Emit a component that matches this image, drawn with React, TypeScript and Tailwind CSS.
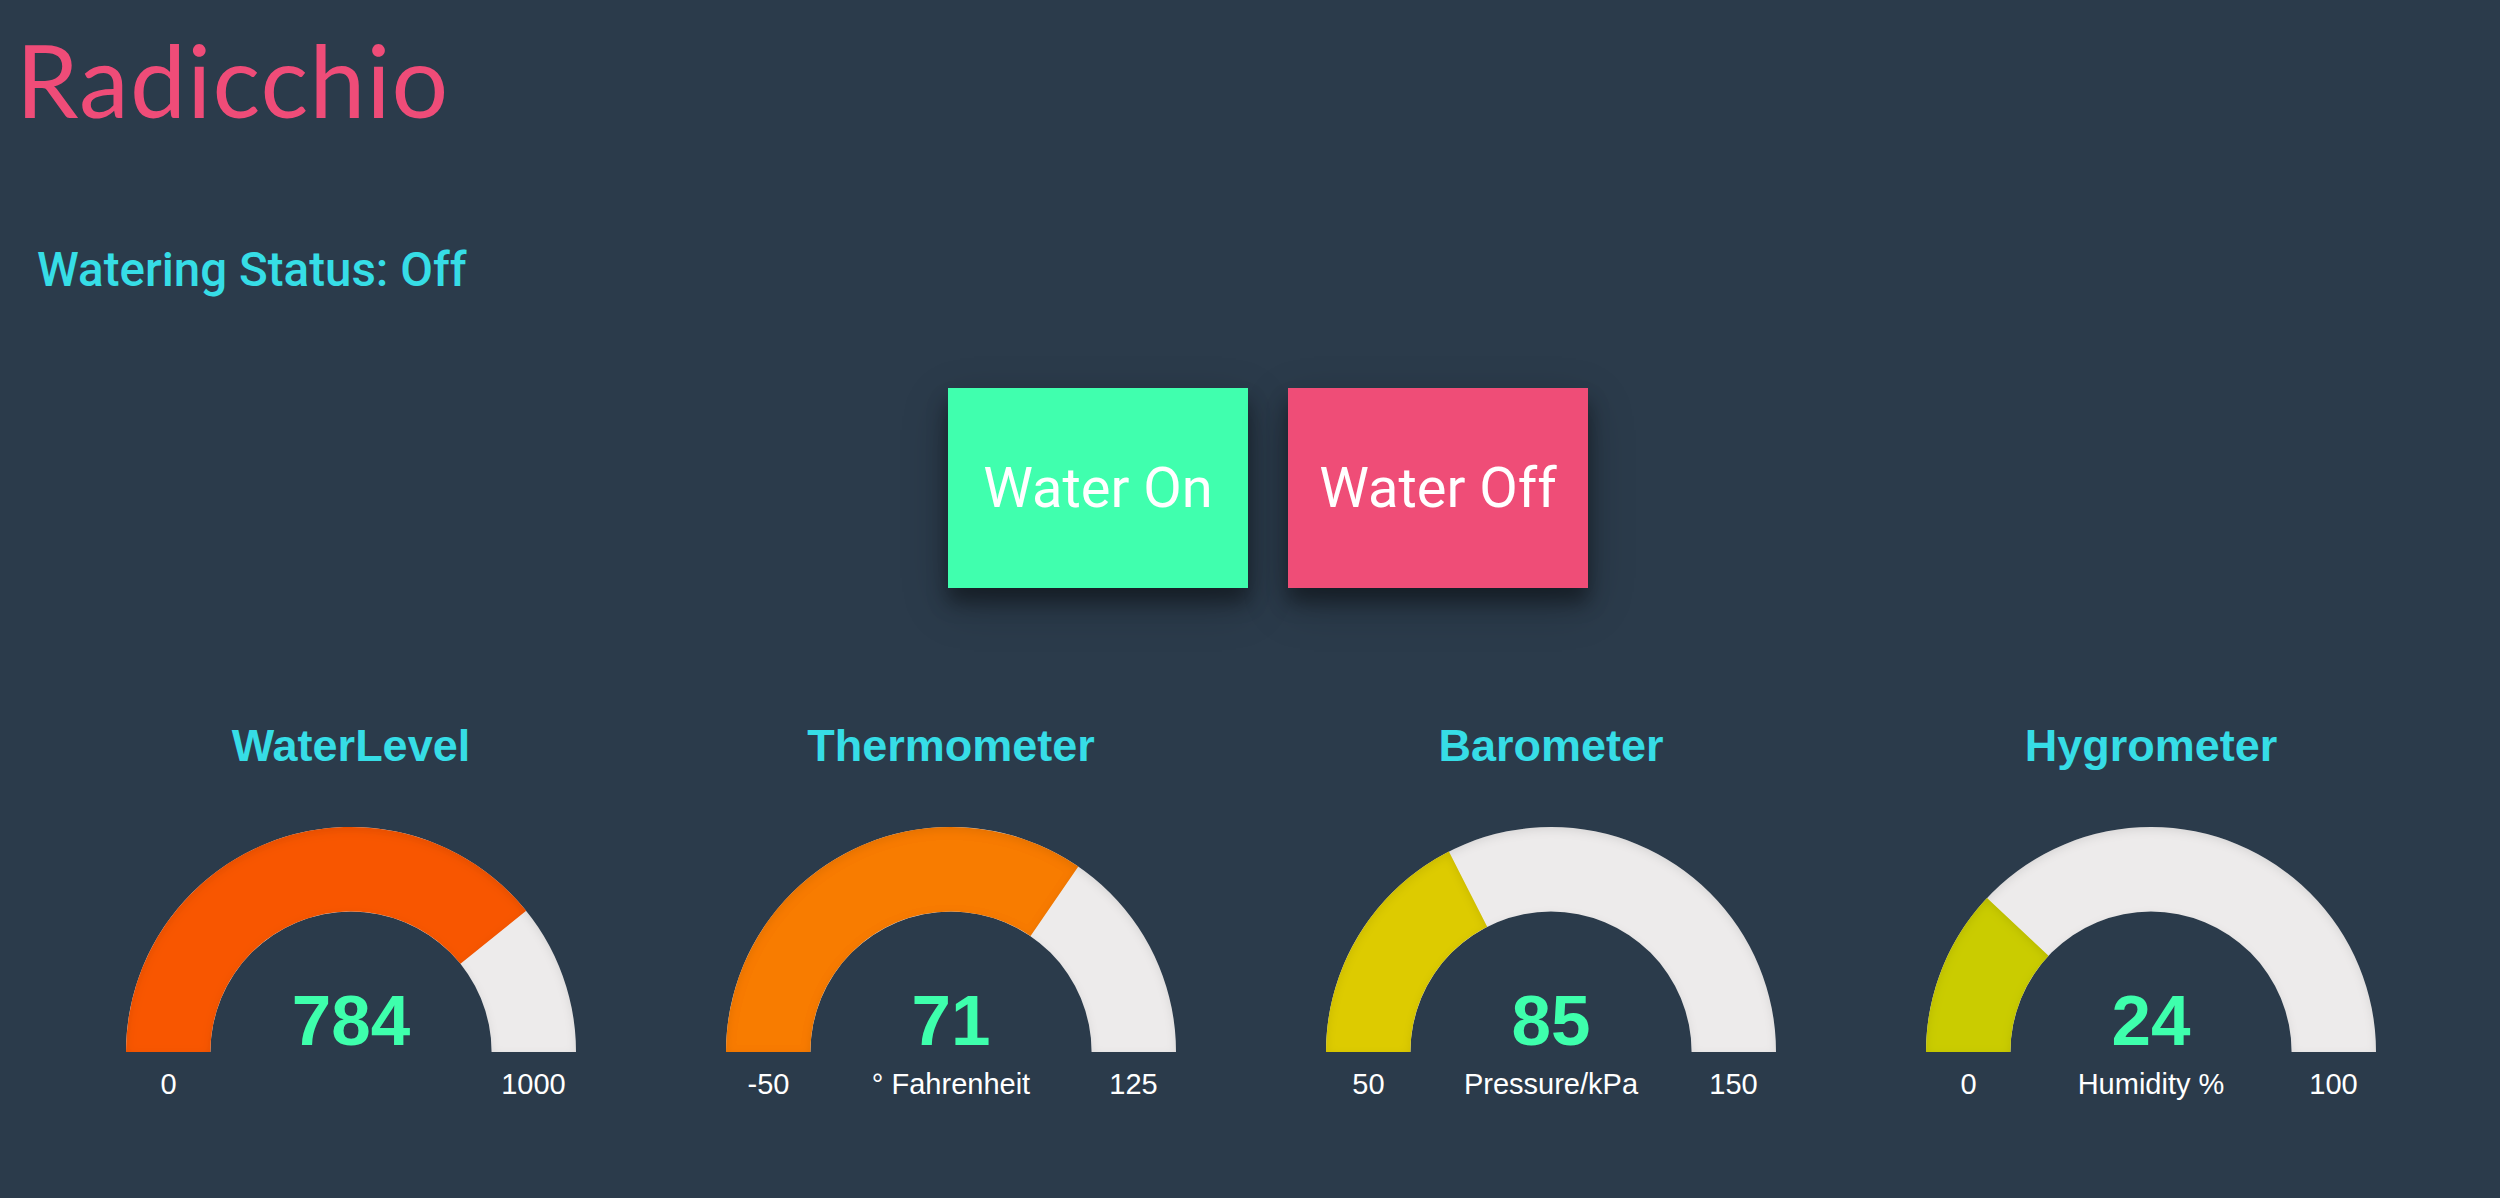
import React from "react";

type G = {
  title: string;
  value: number;
  min: number;
  max: number;
  label?: string;
  color: string;
};

const gauges: G[] = [
  { title: "WaterLevel", value: 784, min: 0, max: 1000, color: "#f85600" },
  { title: "Thermometer", value: 71, min: -50, max: 125, label: "° Fahrenheit", color: "#f87b00" },
  { title: "Barometer", value: 85, min: 50, max: 150, label: "Pressure/kPa", color: "#ddcb02" },
  { title: "Hygrometer", value: 24, min: 0, max: 100, label: "Humidity %", color: "#cacc04" },
];

function arcPath(frac: number, cx: number, cy: number, Ro: number, Ri: number) {
  const a = (1 - frac) * Math.PI;
  const Xo = cx + Ro * Math.cos(a);
  const Yo = cy - Ro * Math.sin(a);
  const Xi = cx + Ri * Math.cos(a);
  const Yi = cy - Ri * Math.sin(a);
  return `M${cx - Ri},${cy} L${cx - Ro},${cy} A${Ro},${Ro} 0 0 1 ${Xo},${Yo} L${Xi},${Yi} A${Ri},${Ri} 0 0 0 ${cx - Ri},${cy} Z`;
}

function Gauge({ g, idx }: { g: G; idx: number }) {
  const frac = (g.value - g.min) / (g.max - g.min);
  const Ro = 225;
  const Ri = 140.6;
  const cx = 225;
  const cy = 225;
  const fid = `inner-shadow-${idx}`;
  return (
    <div className="flex flex-col items-center font-['Liberation_Sans',Arial,sans-serif]">
      <div className="text-[45px] leading-[46px] font-bold text-[#36dde6] whitespace-nowrap">{g.title}</div>
      <div className="relative mt-[58px] h-[225px] w-[450px]">
        <svg width="450" height="225" viewBox="0 0 450 225" className="block">
          <defs>
            <filter id={fid} x="-10%" y="-10%" width="120%" height="120%">
              <feOffset dx="0" dy="3" />
              <feGaussianBlur result="offset-blur" stdDeviation="5" />
              <feComposite operator="out" in="SourceGraphic" in2="offset-blur" result="inverse" />
              <feFlood floodColor="black" floodOpacity="0.2" result="color" />
              <feComposite operator="in" in="color" in2="inverse" result="shadow" />
              <feComposite operator="over" in="shadow" in2="SourceGraphic" />
            </filter>
          </defs>
          <path d={arcPath(1, cx, cy, Ro, Ri)} fill="#edebeb" filter={`url(#${fid})`} />
          <path d={arcPath(frac, cx, cy, Ro, Ri)} fill={g.color} filter={`url(#${fid})`} />
        </svg>
        <div className="absolute left-0 right-0 top-[158px] text-center text-[71px] leading-[71px] font-bold text-[#3effac]">
          {g.value}
        </div>
      </div>
      <div className="mt-[18px] grid w-[450px] grid-cols-[85px_280px_85px] text-[29px] leading-[29px] text-white">
        <div className="flex justify-center whitespace-nowrap">{g.min}</div>
        <div className="flex justify-center whitespace-nowrap">{g.label ?? ""}</div>
        <div className="flex justify-center whitespace-nowrap">{g.max}</div>
      </div>
    </div>
  );
}

export default function App() {
  return (
    <div className="min-h-screen bg-[#2b3b4b]">
      <h1 className="pt-[29px] pl-[16px] text-[100px] leading-[100px] font-normal tracking-[1.2px] font-['Lato',sans-serif] text-[#ef4c78]">
        Radicchio
      </h1>
      <div className="mt-[117px] pl-[37px] text-[47.5px] leading-[48px] font-medium font-['Roboto',sans-serif] text-[#36dde6]">
        Watering Status: Off
      </div>
      <div className="mt-[94px] flex justify-center gap-[40px] pl-[36px] font-['Roboto',sans-serif]">
        <button className="flex h-[200px] w-[300px] items-center justify-center bg-[#40ffae] text-[56px] leading-none text-white shadow-[0_14px_18px_rgba(0,0,0,0.38),0_16px_44px_rgba(0,0,0,0.22)]">
          Water On
        </button>
        <button className="flex h-[200px] w-[300px] items-center justify-center bg-[#ef4d77] text-[56px] leading-none text-white shadow-[0_14px_18px_rgba(0,0,0,0.38),0_16px_44px_rgba(0,0,0,0.22)]">
          Water Off
        </button>
      </div>
      <div className="mt-[135px] grid grid-cols-4 pl-[51px] pr-[49px]">
        {gauges.map((g, i) => (
          <Gauge key={g.title} g={g} idx={i} />
        ))}
      </div>
    </div>
  );
}
